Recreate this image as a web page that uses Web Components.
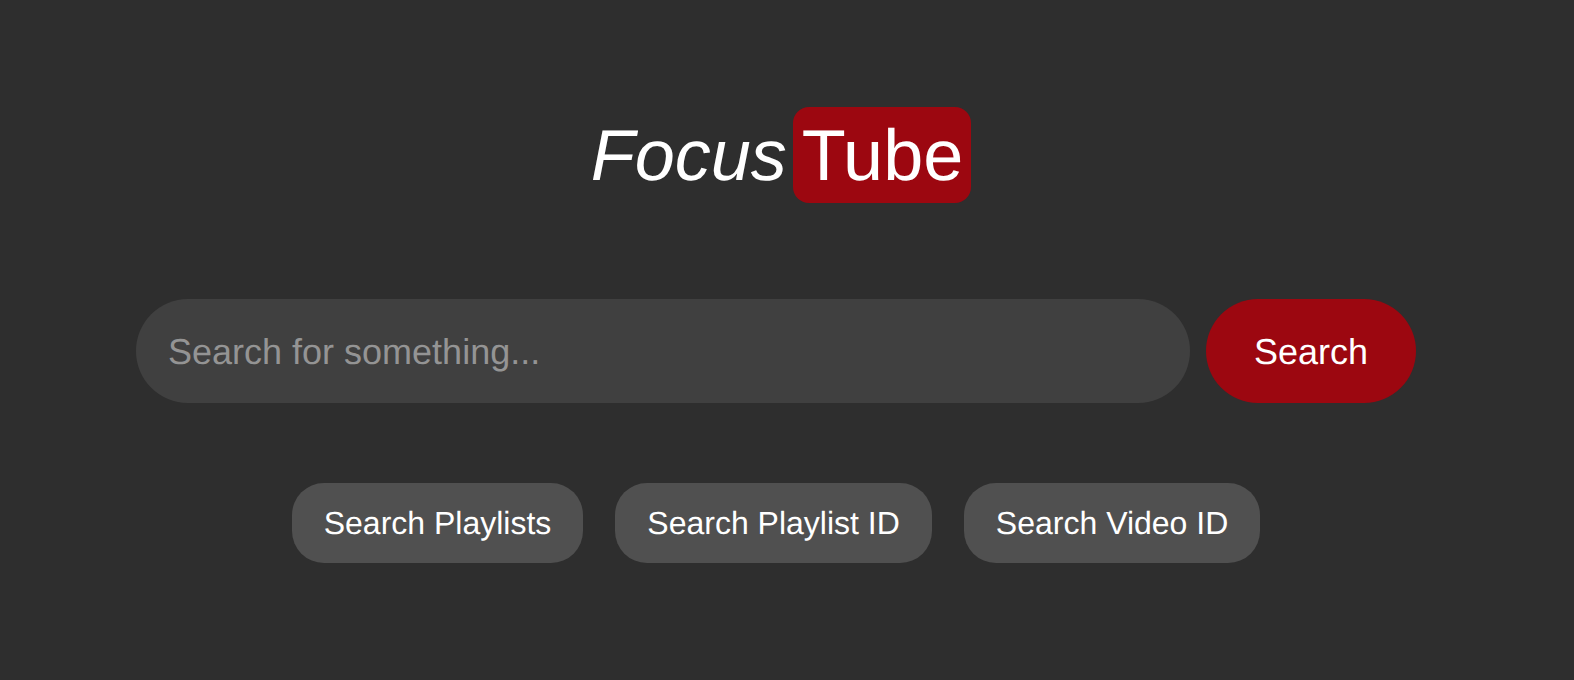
<!DOCTYPE html>
<html><head><meta charset="utf-8"><style>
html,body{margin:0;height:680px;background:#2e2e2e;overflow:hidden}
body{font-family:"Liberation Sans",Arial,sans-serif;text-rendering:geometricPrecision}
</style></head><body>
<focus-app></focus-app>
<template id="t-logo"><style>
:host{display:flex;justify-content:center;align-items:center;color:#fff;font-size:72px;line-height:94px;padding-left:10px}
i{font-style:italic;margin-right:6px;padding:2px 0 0}
span{background:#9c0710;border-radius:16px;padding:2px 8px 0 9px}
</style><i>Focus</i><span>Tube</span></template>
<template id="t-search"><style>
:host{display:flex;gap:16px;justify-content:center}
.in{width:1054px;height:104px;box-sizing:border-box;border-radius:52px;background:#404040;color:#949494;font-size:36px;display:flex;align-items:center;padding:2px 32px 0}
.btn{width:210px;height:104px;box-sizing:border-box;padding-top:2px;border-radius:52px;background:#9c0710;color:#fff;font-size:36px;display:flex;align-items:center;justify-content:center}
</style><div class="in">Search for something...</div><div class="btn">Search</div></template>
<template id="t-chip"><style>
:host{display:flex;align-items:center;height:80px;padding:0 32px;border-radius:32px;background:#505050;color:#fff;font-size:32px}
</style><slot></slot></template>
<template id="t-app"><style>
:host{display:flex;flex-direction:column;padding-top:107px;width:1552px}
.chips{display:flex;gap:32px;justify-content:center;margin-top:80px}
focus-search{margin-top:96px}
</style><focus-logo></focus-logo><focus-search></focus-search><div class="chips"><focus-chip>Search Playlists</focus-chip><focus-chip>Search Playlist ID</focus-chip><focus-chip>Search Video ID</focus-chip></div></template>
<script>
for (const [n,id] of [['focus-logo','t-logo'],['focus-search','t-search'],['focus-chip','t-chip'],['focus-app','t-app']]) {
  customElements.define(n, class extends HTMLElement{constructor(){super();this.attachShadow({mode:'open'}).appendChild(document.getElementById(id).content.cloneNode(true));}});
}
</script>
</body></html>
